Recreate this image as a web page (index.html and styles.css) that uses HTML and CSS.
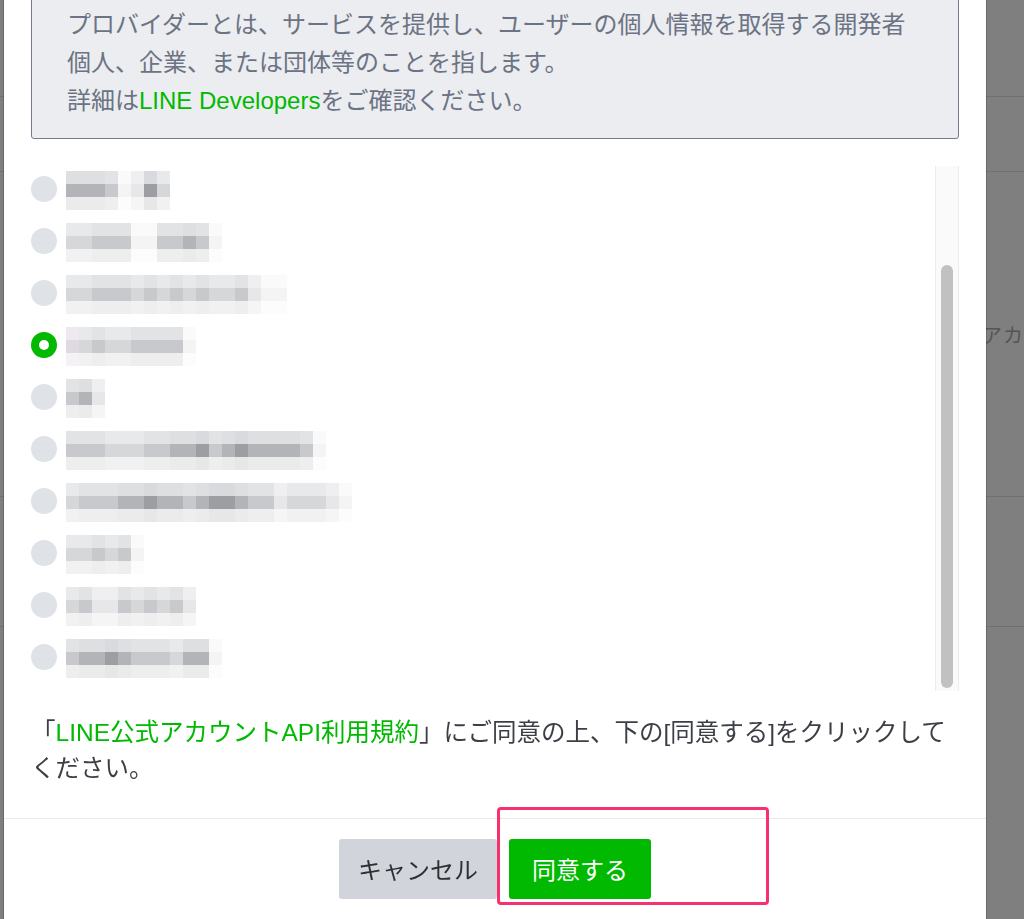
FILE: index.html
```html
<!DOCTYPE html>
<html lang="ja">
<head>
<meta charset="utf-8">
<title>プロバイダーを選択</title>
<link rel="stylesheet" href="styles.css">
</head>
<body>
<div class="page">
  <div class="page-row row-a"></div>
  <div class="page-row row-b"></div>
  <div class="page-row row-c"><span class="page-label">アカ</span></div>
  <div class="page-row row-d"></div>
  <div class="page-row row-e"></div>
</div>
<div class="overlay"></div>
<div class="modal">
  <div class="modal-body">
    <div class="info">
      プロバイダーとは、サービスを提供し、ユーザーの個人情報を取得する開発者<br>
      個人、企業、または団体等のことを指します。<br>
      詳細は<a class="link" href="#">LINE Developers</a>をご確認ください。
    </div>
    <div class="list-wrap">
      <div class="list-view">
        <ul class="providers">
          <li class="provider"><span class="radio"></span><span class="mosaic"><i class="m4"></i><i class="m4"></i><i class="m4"></i><i class="m3"></i><i class="m0"></i><i class="m1"></i><i class="m5"></i><i class="m2"></i></span></li>
          <li class="provider"><span class="radio"></span><span class="mosaic"><i class="m2"></i><i class="m2"></i><i class="m3"></i><i class="m3"></i><i class="m3"></i><i class="m0"></i><i class="m0"></i><i class="m3"></i><i class="m3"></i><i class="m4"></i><i class="m3"></i><i class="m0"></i></span></li>
          <li class="provider"><span class="radio"></span><span class="mosaic"><i class="m2"></i><i class="m2"></i><i class="m3"></i><i class="m3"></i><i class="m3"></i><i class="m2"></i><i class="m3"></i><i class="m2"></i><i class="m3"></i><i class="m2"></i><i class="m3"></i><i class="m2"></i><i class="m2"></i><i class="m3"></i><i class="m1"></i><i class="m0"></i><i class="m0"></i></span></li>
          <li class="provider"><span class="radio radio-on"></span><span class="mosaic"><i class="m1 tint"></i><i class="m2"></i><i class="m3"></i><i class="m2"></i><i class="m2"></i><i class="m3"></i><i class="m3"></i><i class="m3"></i><i class="m3"></i><i class="m0"></i></span></li>
          <li class="provider"><span class="radio"></span><span class="mosaic"><i class="m3"></i><i class="m4"></i><i class="m1"></i></span></li>
          <li class="provider"><span class="radio"></span><span class="mosaic"><i class="m3"></i><i class="m3"></i><i class="m3"></i><i class="m2"></i><i class="m2"></i><i class="m2"></i><i class="m3"></i><i class="m3"></i><i class="m4"></i><i class="m4"></i><i class="m5"></i><i class="m3"></i><i class="m4"></i><i class="m5"></i><i class="m4"></i><i class="m4"></i><i class="m4"></i><i class="m4"></i><i class="m3"></i><i class="m0"></i></span></li>
          <li class="provider"><span class="radio"></span><span class="mosaic"><i class="m2"></i><i class="m3"></i><i class="m3"></i><i class="m3"></i><i class="m4"></i><i class="m4"></i><i class="m5"></i><i class="m4"></i><i class="m4"></i><i class="m3"></i><i class="m4"></i><i class="m5"></i><i class="m5"></i><i class="m4"></i><i class="m3"></i><i class="m3"></i><i class="m1"></i><i class="m2"></i><i class="m2"></i><i class="m2"></i><i class="m1"></i><i class="m0"></i></span></li>
          <li class="provider"><span class="radio"></span><span class="mosaic"><i class="m2"></i><i class="m2"></i><i class="m3"></i><i class="m2"></i><i class="m3"></i><i class="m0"></i></span></li>
          <li class="provider"><span class="radio"></span><span class="mosaic"><i class="m2"></i><i class="m3"></i><i class="m1"></i><i class="m1"></i><i class="m3"></i><i class="m2"></i><i class="m3"></i><i class="m2"></i><i class="m3"></i><i class="m1"></i></span></li>
          <li class="provider"><span class="radio"></span><span class="mosaic"><i class="m3"></i><i class="m4"></i><i class="m4"></i><i class="m5"></i><i class="m4"></i><i class="m3"></i><i class="m3"></i><i class="m3"></i><i class="m2"></i><i class="m4"></i><i class="m4"></i><i class="m0"></i></span></li>
        </ul>
      </div>
      <div class="scrollbar"><div class="thumb"></div></div>
    </div>
    <p class="agree-text">「<a class="link" href="#">LINE公式アカウントAPI利用規約</a>」にご同意の上、下の[同意する]をクリックしてください。</p>
  </div>
  <div class="modal-footer">
    <button class="btn btn-cancel" type="button">キャンセル</button>
    <span class="highlight-wrap">
      <button class="btn btn-agree" type="button">同意する</button>
      <span class="highlight"></span>
    </span>
  </div>
</div>
</body>
</html>
```

FILE: styles.css
```css
html, body {
  margin: 0;
  padding: 0;
}

body {
  width: 1024px;
  height: 919px;
  overflow: hidden;
  position: relative;
  background: #ffffff;
  font-family: "Liberation Sans", "Noto Sans CJK JP", sans-serif;
}

/* background page (dimmed by overlay) */
.page {
  display: flex;
  flex-direction: column;
}

.page-row {
  border-bottom: 1px solid #e0e0e0;
  box-sizing: border-box;
}

.row-a { height: 97px; }
.row-b { height: 75px; }
.row-c {
  height: 325px;
  display: flex;
  align-items: center;
  padding-left: 982px;
  white-space: nowrap;
}
.row-d { height: 130px; }
.row-e { height: 292px; border-bottom: none; }

.page-label {
  font-size: 20px;
  color: #aaaaaa;
  letter-spacing: 1px;
}

.overlay {
  position: fixed;
  inset: 0;
  background: rgba(0, 0, 0, 0.5);
}

/* modal */
.modal {
  position: absolute;
  left: 4px;
  top: -20px;
  width: 982px;
  background: #ffffff;
  box-shadow: 0 0 0 1px rgba(0, 0, 0, 0.18);
}

.modal-body {
  padding: 0 27px 31px;
}

.info {
  border: 1px solid #737b8f;
  border-radius: 3px;
  background: #ebedf0;
  padding: 25px 35px 18px;
  font-size: 24px;
  line-height: 38px;
  color: #6c7384;
  white-space: nowrap;
}

.link {
  color: #00b900;
  text-decoration: none;
}

.list-wrap {
  margin-top: 27px;
  height: 525px;
  display: flex;
}

.list-view {
  flex: 1;
  overflow: hidden;
}

.providers {
  list-style: none;
  margin: -3px 0 0;
  padding: 0;
}

.provider {
  height: 52px;
  display: flex;
  align-items: center;
  gap: 9px;
}

.radio {
  width: 26px;
  height: 26px;
  border-radius: 50%;
  background: #dfe2e7;
  flex: none;
  position: relative;
}

.radio-on {
  background: #00b900;
  box-shadow: 0 0 0 1px #ffffff;
}

.radio-on::after {
  content: "";
  position: absolute;
  left: 8px;
  top: 8px;
  width: 10px;
  height: 10px;
  border-radius: 50%;
  background: #ffffff;
}

.mosaic {
  display: flex;
  margin-top: 3px;
}

.mosaic i {
  display: block;
  width: 13px;
  height: 39px;
}

.m0 { background: linear-gradient(#fafafa 0 13px, #f4f4f5 13px 26px, #fcfcfc 26px); }
.m1 { background: linear-gradient(#efeff1 0 13px, #e7e7e9 13px 26px, #f5f5f6 26px); }
.m2 { background: linear-gradient(#e8e9eb 0 13px, #d6d7d9 13px 26px, #f1f1f2 26px); }
.m3 { background: linear-gradient(#e2e3e5 0 13px, #c8c9cc 13px 26px, #eeeeef 26px); }
.m4 { background: linear-gradient(#dedfe1 0 13px, #b3b4b7 13px 26px, #ebebec 26px); }
.m5 { background: linear-gradient(#d9dadd 0 13px, #9c9ea2 13px 26px, #e7e7e8 26px); }
.tint { background: linear-gradient(#eee8ef 0 13px, #e0d8e2 13px 26px, #f4f2f5 26px); }

.scrollbar {
  width: 22px;
  flex: none;
  background: #fafafa;
  border-left: 1px solid #ececec;
  border-right: 1px solid #ececec;
  display: flex;
  flex-direction: column;
  justify-content: flex-end;
  align-items: center;
  padding-bottom: 3px;
  box-sizing: content-box;
}

.thumb {
  width: 12px;
  height: 423px;
  border-radius: 6px;
  background: #c1c1c1;
}

.agree-text {
  margin: 24px 0 0;
  font-size: 24.5px;
  line-height: 36px;
  color: #3c3f45;
}

.modal-footer {
  border-top: 1px solid #e9e9e9;
  padding: 20px 0 30px;
  display: flex;
  justify-content: center;
  gap: 12px;
}

.btn {
  height: 60px;
  border: none;
  border-radius: 3px;
  font-family: "Liberation Sans", "Noto Sans CJK JP", sans-serif;
  font-size: 24px;
  padding: 0 19px 2px;
  cursor: pointer;
}

.btn-cancel {
  background: #d1d5db;
  color: #2e3033;
}

.btn-agree {
  background: #00b900;
  color: #ffffff;
  padding: 0 23px 2px;
}

.highlight-wrap {
  position: relative;
  display: flex;
}

.highlight {
  position: absolute;
  left: -12px;
  top: -32px;
  width: 272px;
  height: 98px;
  box-sizing: border-box;
  border: 3px solid #f7306e;
  border-radius: 4px;
  pointer-events: none;
}
```
